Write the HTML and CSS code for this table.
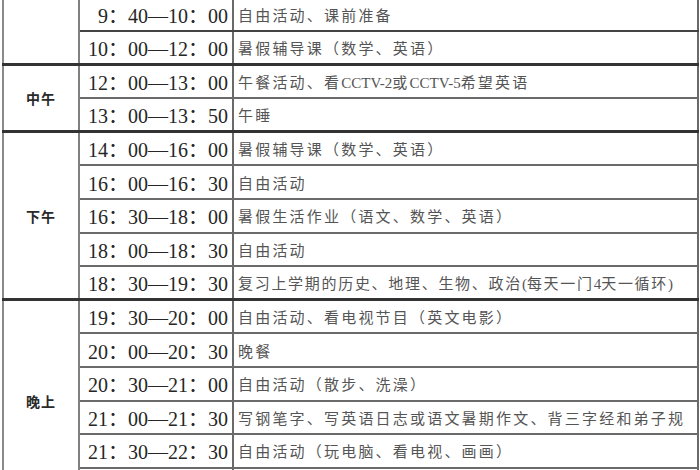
FILE: index.html
```html
<!DOCTYPE html>
<html lang="zh">
<head>
<meta charset="utf-8">
<title>暑假作息时间表</title>
<link rel="stylesheet" href="styles.css">
</head>
<body>
<table class="sheet">
  <colgroup>
    <col class="c-group">
    <col class="c-time">
    <col class="c-act">
  </colgroup>
  <tbody>
    <tr class="dark-bottom">
      <td class="group" rowspan="2"></td>
      <td class="time">9：40—10：00</td>
      <td class="act">自由活动、课前准备</td>
    </tr>
    <tr>
      <td class="time">10：00—12：00</td>
      <td class="act">暑假辅导课（数学、英语）</td>
    </tr>

    <tr class="grp-start">
      <td class="group" rowspan="2">中午</td>
      <td class="time">12：00—13：00</td>
      <td class="act">午餐活动、看<span class="lat">CCTV-2</span>或<span class="lat">CCTV-5</span>希望英语</td>
    </tr>
    <tr>
      <td class="time">13：00—13：50</td>
      <td class="act">午睡</td>
    </tr>

    <tr class="grp-start">
      <td class="group" rowspan="5">下午</td>
      <td class="time">14：00—16：00</td>
      <td class="act">暑假辅导课（数学、英语）</td>
    </tr>
    <tr>
      <td class="time">16：00—16：30</td>
      <td class="act">自由活动</td>
    </tr>
    <tr>
      <td class="time">16：30—18：00</td>
      <td class="act">暑假生活作业（语文、数学、英语）</td>
    </tr>
    <tr>
      <td class="time">18：00—18：30</td>
      <td class="act">自由活动</td>
    </tr>
    <tr class="dark-top">
      <td class="time">18：30—19：30</td>
      <td class="act act-tight">复习上学期的历史、地理、生物、政治<span class="lat">(</span>每天一门<span class="lat">4</span>天一循环<span class="lat">)</span></td>
    </tr>

    <tr class="grp-start">
      <td class="group" rowspan="6">晚上</td>
      <td class="time">19：30—20：00</td>
      <td class="act">自由活动、看电视节目（英文电影）</td>
    </tr>
    <tr>
      <td class="time">20：00—20：30</td>
      <td class="act">晚餐</td>
    </tr>
    <tr class="dark-top">
      <td class="time">20：30—21：00</td>
      <td class="act">自由活动（散步、洗澡）</td>
    </tr>
    <tr>
      <td class="time">21：00—21：30</td>
      <td class="act">写钢笔字、写英语日志或语文暑期作文、背三字经和弟子规</td>
    </tr>
    <tr>
      <td class="time">21：30—22：30</td>
      <td class="act">自由活动（玩电脑、看电视、画画）</td>
    </tr>
    <tr>
      <td class="time"></td>
      <td class="act"></td>
    </tr>
  </tbody>
</table>
</body>
</html>
```
FILE: styles.css
```css
html, body {
  margin: 0;
  padding: 0;
  background: #ffffff;
  overflow: hidden;
}

.sheet {
  border-collapse: collapse;
  table-layout: fixed;
  width: 695px;
  margin: -3.6px 0 0 2px;
}

.c-group { width: 76px; }
.c-time { width: 154px; }
.c-act { width: 465px; }

.sheet tr {
  height: 33.6px;
}

.sheet td {
  border: 2px solid #6a6a6a;
  padding: 0;
  vertical-align: middle;
  white-space: nowrap;
  overflow: hidden;
}

.sheet tr.grp-start td {
  border-top: 3px solid #333333;
}

.sheet tr.dark-top td {
  border-top: 2px solid #444444;
}

.sheet tr.dark-bottom td {
  border-bottom: 2px solid #444444;
}

.sheet td.group {
  border-left: 2px solid #8a8a8a;
  border-right: 2px solid #808080;
  text-align: center;
  font-family: "Noto Sans CJK SC", sans-serif;
  font-weight: 700;
  font-size: 14px;
  letter-spacing: 1px;
  color: #2a2a2a;
}

.sheet td.time {
  text-align: right;
  padding-right: 4px;
  font-family: "Liberation Serif", "Noto Sans CJK SC", serif;
  font-size: 20px;
  color: #262626;
}

.sheet td.act {
  padding-left: 4px;
  font-family: "Noto Sans CJK SC", sans-serif;
  font-size: 15px;
  letter-spacing: 2.2px;
  color: #555555;
}

.sheet td.act-tight {
  letter-spacing: 1.7px;
}

.lat {
  letter-spacing: 0;
  font-family: "Liberation Serif", serif;
  font-size: 15px;
}
```
